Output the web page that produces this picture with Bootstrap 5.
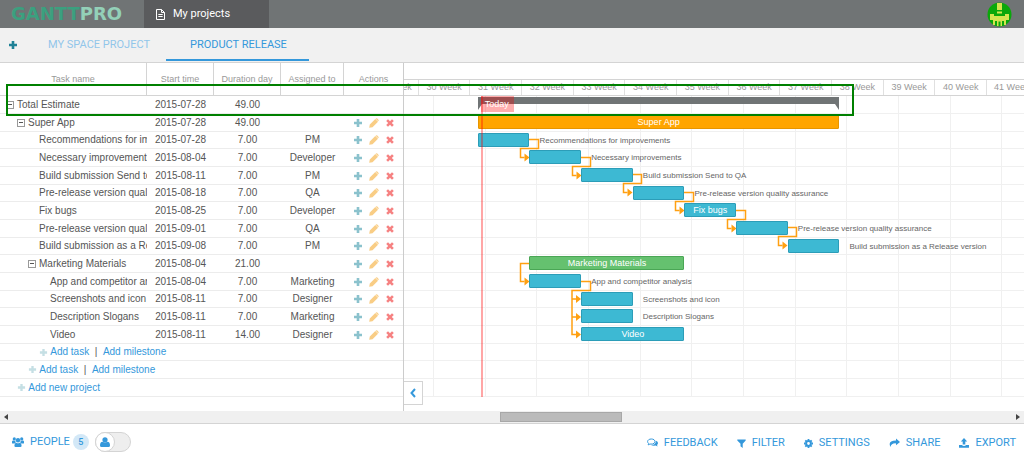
<!DOCTYPE html>
<html lang="en">
<head>
<meta charset="utf-8">
<meta name="viewport" content="width=device-width, initial-scale=1">
<title>GanttPRO – Product release</title>
<link href="https://cdn.jsdelivr.net/npm/bootstrap@5.3.0/dist/css/bootstrap.min.css" rel="stylesheet">
<script src="https://cdn.jsdelivr.net/npm/bootstrap@5.3.0/dist/js/bootstrap.bundle.min.js"></script>
<style>
body{font-family:"Liberation Sans",Arial,sans-serif;font-size:10px;line-height:16px;color:#555;background:#fff}
a{text-decoration:none;color:#3498db}
button{background:none;border:0;padding:0;color:inherit;font:inherit}
svg{display:block}
.roboto{font-family:Roboto,sans-serif;font-size:11px;line-height:16px}
.topbar{background:#707475;height:28px}
.logo{font-family:"DejaVu Sans",sans-serif;font-weight:700;font-size:18px;line-height:28px;color:#3ba07f;width:144px;padding-left:11px}
.logo span{color:#93d0b8}
.app-tab{background:#5a5b5d;color:#fff;width:125px}
.projects{background:#f1f1f1;height:34px}
.projects a{line-height:34px;height:34px;padding:0 21px;color:#92c6ea}
.projects a.active{color:#3498db;border-bottom:2px solid #3498db;height:33px;padding:0 22px 0 24px;margin-left:-5px}
.add-tab{width:27px;padding-left:8px;color:#1f8196}
.workspace{border-top:1px solid #d4d4d4}
.task-pane{width:404px;border-right:1px solid #ccc}
.task-table{table-layout:fixed;width:100%;border-collapse:separate;border-spacing:0}
.task-table th{height:33px;font-size:9px;font-weight:400;color:#999;text-align:center;padding:0;border-right:1px solid #d4d4d4;border-bottom:1px solid #d4d4d4}
.task-table th:last-child{border-right:0}
.task-table td{height:18px;line-height:16px;padding:0;text-align:center;border-bottom:1px solid #ececec;white-space:nowrap;overflow:hidden}
.task-table tbody tr:nth-child(3n) td{height:17px}
.task-table td.task{text-align:left}
.task-table .lv0{padding-left:6px}
.task-table .lv1{padding-left:17px}
.task-table .lv2{padding-left:28px}
.task-table .lv3{padding-left:39px}
.task-table .lv4{padding-left:50px}
.fold{width:8px;height:8px;border:1px solid #999;vertical-align:middle;margin-right:3px;display:inline-flex;align-items:center;justify-content:center}
.fold::after{content:"";width:4px;height:1px;background:#555}
.actions{gap:6px}
.actions button{line-height:14px}
.actions svg{opacity:.55}
.faint{color:#c5dfe4}
.chart-pane{min-width:0}
.band{height:17px;border-bottom:1px solid #d4d4d4}
.days{display:grid;grid-template-columns:repeat(84,minmax(0,1fr))}
.weeks{height:16px;border-bottom:1px solid #d4d4d4;font-size:9px;line-height:15px;color:#999;overflow:hidden}
.weeks span{grid-column:span 7;border-right:1px solid #e0e0e0;text-align:center;white-space:nowrap;overflow:hidden}
.weeks span:first-child{grid-column:span 2;display:flex;justify-content:flex-end;padding-right:6px}
.weeks span:last-child{grid-column:span 5;border:0;text-align:left;padding-left:7px}
.chart-body{grid-template-rows:repeat(5,18px 18px 17px) 18px 18px;align-items:center;position:relative;margin-bottom:14px}
.chart-svg{position:absolute;inset:0;width:100%;height:100%}
.chart-body>div{position:relative}
.task-bar{height:14px;line-height:13px;align-self:start;margin-top:1px;border:1px solid #2c9db8;background:#3db9d3;border-radius:1px;color:#fff;font-size:9px;text-align:center;white-space:nowrap}
.task-bar.phase{background:#ffa500;border-color:#e69500}
.task-bar.group{background:#65c16f;border-color:#4aa655}
.bar-note{font-size:8px;line-height:14px;white-space:nowrap;padding-left:10px;color:#666}
.today-line{grid-area:1/11/18/13;align-self:stretch;width:2px;margin-left:3px;background:rgba(255,0,0,.35)}
.today-flag{position:absolute;left:0;top:0;height:16px;line-height:16px;width:33px;background:rgba(255,0,0,.32);color:#fff;font-size:9px;padding-left:4px}
.highlight{position:absolute;left:6px;right:16.6%;top:21px;height:32px;border:2px solid #008000;pointer-events:none}
.collapse-btn{position:absolute;left:404px;bottom:6px;width:19px;height:24px;border:1px solid #d4d4d4;border-left:0;background:#fff;color:#3498db}
.hscroll{height:13px;background:#f0f0f0;border-bottom:1px solid #d4d4d4;color:#444}
.hscroll .thumb{height:10px;border:1px solid #a8a8a8;background:#bbb;margin-left:48%;width:12%}
.bottom{height:35px;color:#3498db}
.bottom a svg{margin-right:6px}
.tools{gap:19px;padding-top:3px}
.count{background:#d3e8f7;border-radius:8px;width:16px;height:16px;text-align:center;font-size:9px;font-weight:500;margin-left:3px}
.person-switch{width:36px;height:20px;margin-left:6px;position:relative}
.person-switch input{appearance:none;width:36px;height:20px;margin:0;border:1px solid #d4d4d4;border-radius:10px;background:#eee;display:block}
.person-switch span{position:absolute;left:0;top:0;width:20px;height:20px;border:1px solid #d4d4d4;border-radius:10px;background:#fff}
</style>
</head>
<body>
<svg width="0" height="0" class="position-absolute" aria-hidden="true">
  <symbol id="i-plus" viewBox="0 0 10 10"><path d="M3.700 1h2.600v2.700H9v2.600H6.300V9H3.700V6.300H1V3.700h2.700z" fill="currentColor"/></symbol>
  <symbol id="i-pen" viewBox="0 0 10 10"><path d="M.2 9.800.8 6.500 6.300 1 9 3.700 3.500 9.200zM6.900.6Q7.600 0 8.300.6l1.100 1.100q.6.700 0 1.400l-.2.200L6.700.8z" fill="currentColor"/></symbol>
  <symbol id="i-del" viewBox="0 0 10 10"><path d="M3 1.200 5 3.200 7 1.200 8.800 3 6.800 5l2 2L7 8.800l-2-2-2 2L1.200 7l2-2-2-2z" fill="currentColor"/></symbol>
</svg>

<header class="topbar d-flex align-items-stretch">
  <a href="#" class="logo">GANTT<span>PRO</span></a>
  <a href="#" class="app-tab roboto d-flex align-items-center ps-2">
    <svg class="ms-1" width="9" height="11" viewBox="0 0 9 11" fill="none" stroke="#fff"><path d="M.5.5h5l3 3v7h-8zM5.500.5v3h3M2.300 5.500h4.400M2.300 7.500h4.400"/></svg>
    <span class="ps-2">My projects</span>
  </a>
  <button class="ms-auto me-2 pe-1" aria-label="Account">
    <svg width="25" height="25" viewBox="0 0 25 25"><circle cx="12.500" cy="12.500" r="12" fill="#0aa80a"/><path fill="#d3e44f" d="M10 1h5v7h-5zM10 9.500h5v2h-5zM3 12h4v2h11v-2h4v6h-3v5h-2v-4h-2v5h-5v-5H8v4H6v-5H3z"/><path fill="#0aa80a" d="M11.500 19.500h2V24h-2z"/></svg>
  </button>
</header>

<nav class="projects roboto d-flex">
  <button class="add-tab" aria-label="Add project"><svg width="10" height="10"><use href="#i-plus"/></svg></button>
  <a href="#">MY SPACE PROJECT</a>
  <a href="#" class="active">PRODUCT RELEASE</a>
</nav>

<main class="workspace d-flex position-relative">
  <div class="task-pane flex-shrink-0">
    <table class="task-table">
      <colgroup><col style="width:147px"><col style="width:67px"><col style="width:67px"><col style="width:63px"><col></colgroup>
      <thead><tr><th>Task name</th><th>Start time</th><th>Duration day</th><th>Assigned to</th><th>Actions</th></tr></thead>
      <tbody id="tasks"></tbody>
    </table>
  </div>
  <div class="chart-pane flex-grow-1">
    <div class="band"></div>
    <div class="days weeks"><span>29 Week</span><span>30 Week</span><span>31 Week</span><span>32 Week</span><span>33 Week</span><span>34 Week</span><span>35 Week</span><span>36 Week</span><span>37 Week</span><span>38 Week</span><span>39 Week</span><span>40 Week</span><span>41 Week</span></div>
    <div class="days chart-body" id="chart">
      <svg class="chart-svg" viewBox="0 0 620 301" preserveAspectRatio="none" fill="none">
        <defs>
          <g id="step"><path d="M125 43.500h9.500v9h-18v9h4" stroke="#ffa011" stroke-width="1.500"/><path d="M120.500 57.500 125.500 61.500 120.500 65.500z" fill="#ffa011"/></g>
          <path id="tip" d="M0-4 5 0 0 4z" fill="#ffa011"/>
        </defs>
        <path stroke="#f0f0f0" d="M29.500 0V301M81.500 0V301M132.500 0V301M184.500 0V301M236.500 0V301M287.500 0V301M339.500 0V301M391.500 0V301M442.500 0V301M494.500 0V301M546.500 0V301M597.500 0V301M0 17.500H620M0 35.500H620M0 52.500H620M0 70.500H620M0 88.500H620M0 105.500H620M0 123.500H620M0 141.500H620M0 158.500H620M0 176.500H620M0 194.500H620M0 211.500H620M0 229.500H620M0 247.500H620M0 264.500H620M0 282.500H620M0 300.500H620"/>
        <path fill="#707475" d="M74 1H435V14L431 8H78L74 14z"/>
        <use href="#step"/><use href="#step" x="52" y="18"/><use href="#step" x="103" y="35"/><use href="#step" x="155" y="53"/><use href="#step" x="207" y="71"/><use href="#step" x="258" y="88"/>
        <g stroke="#ffa011" stroke-width="1.500"><path d="M126 167.500h-9.500v18h4M177 185.500h9.500v9h-18.500v44h4M168 203h4M168 221h4"/></g>
        <use href="#tip" x="120.500" y="185.500"/><use href="#tip" x="172" y="203"/><use href="#tip" x="172" y="221"/><use href="#tip" x="172" y="238.500"/>
      </svg>
    </div>
  </div>
  <div class="highlight"></div>
  <button class="collapse-btn d-flex align-items-center justify-content-center" aria-label="Hide task list"><svg width="6" height="10" viewBox="0 0 6 10" fill="none" stroke="currentColor" stroke-width="2"><path d="M5 1 1.500 5 5 9"/></svg></button>
</main>

<div class="hscroll d-flex align-items-center">
  <svg class="ms-1" width="4" height="6" viewBox="0 0 4 6"><path d="M4 0v6L0 3z" fill="currentColor"/></svg>
  <div class="thumb"></div>
  <svg class="ms-auto me-1" width="4" height="6" viewBox="0 0 4 6"><path d="M0 0v6l4-3z" fill="currentColor"/></svg>
</div>

<footer class="bottom roboto d-flex align-items-center px-2">
  <a href="#" class="d-flex align-items-center ms-1">
    <svg width="12" height="10" viewBox="0 0 12 10" fill="currentColor"><circle cx="2.300" cy="1.900" r="1.600"/><circle cx="9.700" cy="1.900" r="1.600"/><circle cx="6" cy="3.300" r="2.200"/><path d="M0 6V4.500Q.3 3.500 1.200 3.600L3.300 4q.2 1 .8 1.500Q3 5.700 2.600 6.500H.8Q0 6.500 0 6zM12 6V4.500q-.3-1-1.200-.9L8.700 4q-.2 1-.8 1.500 1.100.2 1.500 1h1.800q.8 0 .8-.5zM2.400 8.700Q2.400 5.900 4.300 5.700q1.700 1 3.400 0 1.900.2 1.900 3Q9.600 10 8.400 10H3.600Q2.400 10 2.400 8.700z"/></svg>PEOPLE<span class="count">5</span></a>
  <label class="person-switch"><input type="checkbox" role="switch" aria-label="Show people"><span class="d-flex align-items-center justify-content-center"><svg width="10" height="10" viewBox="0 0 10 10" fill="currentColor"><circle cx="5" cy="2.800" r="2.600"/><path d="M0 8.500Q0 5 2.500 4.800q2.500 1.500 5 0Q10 5 10 8.500 10 10 8.500 10h-7Q0 10 0 8.500z"/></svg></span></label>
  <div class="tools d-flex ms-auto">
    <a href="#" class="d-flex align-items-center"><svg width="11" height="10" viewBox="0 0 11 10"><path d="M4.300 1C2.200 1 .6 2.100.6 3.600q0 1 1 1.800L1.200 6.900l1.700-.8q3.300.4 4.700-1.200Q9 2.900 7 1.700 5.900 1 4.300 1z" fill="none" stroke="currentColor"/><path d="M9 2.700q2 .8 2 2.400 0 1-1 1.800l.6 1.600-2-1Q5.600 8 4 6.900q5 0 5-4.200z" fill="currentColor"/></svg>FEEDBACK</a>
    <a href="#" class="d-flex align-items-center"><svg width="9" height="9" viewBox="0 0 9 9"><path d="M.3.500h8.400v1L5.700 4.700V9L3.500 7.300V4.700L.3 1.500z" fill="currentColor"/></svg>FILTER</a>
    <a href="#" class="d-flex align-items-center"><svg width="9" height="9" viewBox="0 0 9 9" fill="none" stroke="currentColor"><circle cx="4.500" cy="4.500" r="2.400" stroke-width="2"/><path d="M4.500 0v1.500M4.500 7.500V9M0 4.500h1.500M7.500 4.500H9M1.300 1.300l1 1M6.700 6.700l1 1M1.300 7.700l1-1M6.700 2.300l1-1" stroke-width="1.800"/></svg>SETTINGS</a>
    <a href="#" class="d-flex align-items-center"><svg width="11" height="10" viewBox="0 0 11 10"><path d="M7 .5 11 4 7 7.300V5.400Q2.500 5 1.400 9-1.500 2.500 7 2.400z" fill="currentColor"/></svg>SHARE</a>
    <a href="#" class="d-flex align-items-center"><svg width="10" height="10" viewBox="0 0 10 10" fill="currentColor"><path d="M5 0 8.200 3.500H6.300V6.500H3.700V3.500H1.800z"/><path d="M0 7h3q.5 1 2 1t2-1h3v2.800H0z"/></svg>EXPORT</a>
  </div>
</footer>

<script>
// level, name, start, days, assignee, can fold
const tasks = [
  [0,'Total Estimate','2015-07-28','49.00','',1],
  [1,'Super App','2015-07-28','49.00','',1],
  [3,'Recommendations for improvements','2015-07-28','7.00','PM'],
  [3,'Necessary improvements','2015-08-04','7.00','Developer'],
  [3,'Build submission Send to QA','2015-08-11','7.00','PM'],
  [3,'Pre-release version quality assurance','2015-08-18','7.00','QA'],
  [3,'Fix bugs','2015-08-25','7.00','Developer'],
  [3,'Pre-release version quality assurance','2015-09-01','7.00','QA'],
  [3,'Build submission as a Release version','2015-09-08','7.00','PM'],
  [2,'Marketing Materials','2015-08-04','21.00','',1],
  [4,'App and competitor analysis','2015-08-04','7.00','Marketing'],
  [4,'Screenshots and icon','2015-08-11','7.00','Designer'],
  [4,'Description Slogans','2015-08-11','7.00','Marketing'],
  [4,'Video','2015-08-11','14.00','Designer']
];
const icon = (id, size) => `<svg width="${size}" height="${size}" class="d-inline-block align-middle"><use href="#i-${id}"/></svg>`;
const action = (id, label, color) => `<button aria-label="${label}" style="color:${color}">${icon(id, 10)}</button>`;
const actions = '<div class="d-flex justify-content-center actions">' + action('plus','Add','#2d92a5') + action('pen','Edit','#f5a623') + action('del','Delete','#f01c1c') + '</div>';
const adds = lv => `<tr><td colspan="5" class="task lv${lv}"><span class="faint">${icon('plus', 9)}</span> <a href="#">Add task</a>&nbsp; | &nbsp;<a href="#">Add milestone</a></td></tr>`;
document.getElementById('tasks').innerHTML = tasks.map(([lv, name, start, days, who, fold], i) =>
  `<tr><td class="task lv${lv}">${fold ? '<button class="fold" aria-label="Fold"></button>' : ''}${name}</td><td>${start}</td><td>${days}</td><td>${who}</td><td>${i ? actions : ''}</td></tr>`
).join('') + adds(3) + adds(2) + `<tr><td colspan="5" class="task lv1"><span class="faint">${icon('plus', 9)}</span> <a href="#">Add new project</a></td></tr>`;

// The first bar starts on day column 11 of the visible range.
const inside = {1:'phase', 6:'', 9:'group', 13:''};
const first = Date.parse('2015-07-28');
document.getElementById('chart').insertAdjacentHTML('beforeend', tasks.map(([, name, start, days], i) => {
  if (!i) return '';
  const col = 11 + (Date.parse(start) - first) / 864e5, end = col + +days, own = i in inside;
  return `<div class="task-bar ${inside[i] || ''}" style="grid-area:${i + 1}/${col}/auto/${end}">${own ? name : ''}</div>` +
    (own ? '' : `<div class="bar-note" style="grid-area:${i + 1}/${end}">${name}</div>`);
}).join('') + '<div class="today-line"><div class="today-flag">Today</div></div>');
</script>
</body>
</html>
